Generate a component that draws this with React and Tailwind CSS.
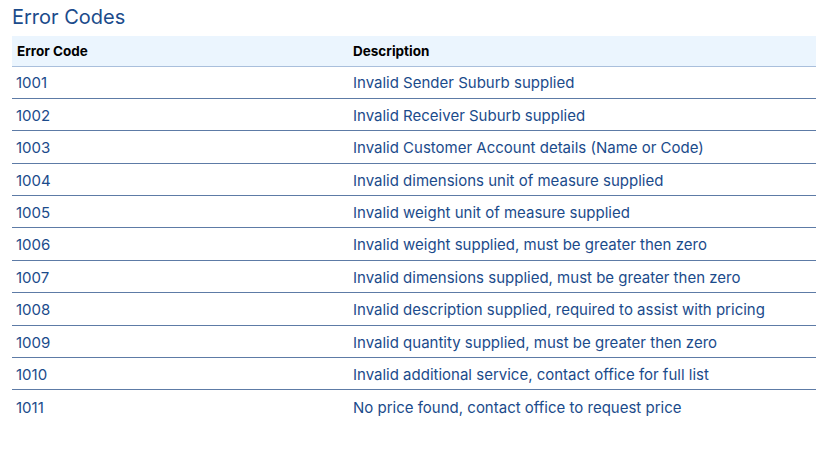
const codes = [
  ["1001", "Invalid Sender Suburb supplied"],
  ["1002", "Invalid Receiver Suburb supplied"],
  ["1003", "Invalid Customer Account details (Name or Code)"],
  ["1004", "Invalid dimensions unit of measure supplied"],
  ["1005", "Invalid weight unit of measure supplied"],
  ["1006", "Invalid weight supplied, must be greater then zero"],
  ["1007", "Invalid dimensions supplied, must be greater then zero"],
  ["1008", "Invalid description supplied, required to assist with pricing"],
  ["1009", "Invalid quantity supplied, must be greater then zero"],
  ["1010", "Invalid additional service, contact office for full list"],
  ["1011", "No price found, contact office to request price"],
]

export default function App() {
  return (
    <div className="bg-white min-h-[450px] pl-3 pt-[3px] font-['Inter',sans-serif]">
      <h2 className="text-[20px] leading-[28px] text-[#1b4b8b] mb-[5px]">Error Codes</h2>

      <table className="w-full border-collapse text-left">
        <thead>
          <tr className="bg-[#ebf5fe] border-b border-[#a9bfdc] h-[30px]">
            <th className="w-[337px] pl-[5px] text-[13.5px] font-bold text-black">Error Code</th>
            <th className="pl-[4px] text-[13.5px] font-bold text-black">Description</th>
          </tr>
        </thead>
        <tbody>
          {codes.map(([code, desc], i) => (
            <tr
              key={code}
              className={`h-[32.4px] text-[15px] text-[#1b4b8b] ${
                i < codes.length - 1 ? "border-b border-[#5d7ba6]" : ""
              }`}
            >
              <td className="pl-[4px] pt-[3px]">{code}</td>
              <td className="pl-[4px] pt-[3px]">{desc}</td>
            </tr>
          ))}
        </tbody>
      </table>
    </div>
  )
}
